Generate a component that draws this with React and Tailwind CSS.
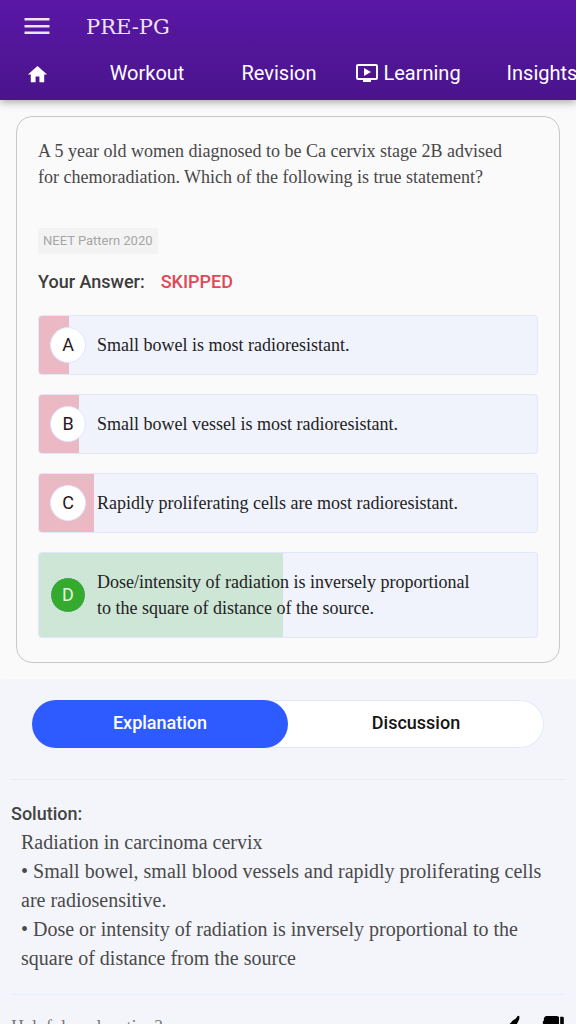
import React from 'react';
import { MdHome, MdOndemandVideo } from 'react-icons/md';

const serif = "font-['Liberation_Serif',serif]";

const options = [
  { letter: 'A', text: 'Small bowel is most radioresistant.', share: 6 },
  { letter: 'B', text: 'Small bowel vessel is most radioresistant.', share: 8 },
  { letter: 'C', text: 'Rapidly proliferating cells are most radioresistant.', share: 11 },
  {
    letter: 'D',
    text: 'Dose/intensity of radiation is inversely proportional to the square of distance of the source.',
    share: 49,
    correct: true,
  },
];

const ThumbIcon = ({ className = '' }) => {
  return (
    <svg viewBox="0 0 24 24" className={`size-6 ${className}`} fill="currentColor">
      <path d="M1.200 11.500h3.600v10.800H2.500c-.8 0-1.300-.6-1.300-1.300z" />
      <path d="M6 12c3.600-.6 6.200-3.300 8.400-6.200 2-1.500 4-2.300 4.800-4.400.3-.9 1.900-.8 2.200.2.500 2.600-1.600 5.300-2.800 7.900h2.600c2.100 0 2.300 2.700.8 3.200 1.300.8 1 2.600-.4 3 1 .9.700 2.500-.6 2.900.6 1.500-.2 4.100-2.400 4.400H9c-1.300 0-2-.5-3-.9z" />
    </svg>
  );
};

const Header = () => {
  return (
    <header className="relative z-10 shrink-0 bg-linear-to-b from-[#5a17a6] to-[#4a148c] text-white shadow-[0_2px_8px_rgba(0,0,0,0.35)]">
      <div className="flex h-[52px] items-center pl-[22px] text-[#ece3f3]">
        <button type="button" aria-label="Open menu" className="mr-[34px]">
          <svg viewBox="0 0 30 30" className="size-[30px]" fill="currentColor">
            <path d="M2.500 7h25v2.500h-25zM2.500 14h25v2.500h-25zM2.500 20.500h25V23h-25z" />
          </svg>
        </button>
        <h1 className="pt-1 font-['DejaVu_Serif',serif] text-[21px]">PRE-PG</h1>
      </div>
      <nav className="flex h-12 overflow-hidden pb-1.5 text-xl">
        <a href="#home" aria-label="Home" className="flex w-[74px] shrink-0 items-center justify-center pt-0.5">
          <MdHome className="size-[23px]" />
        </a>
        <a href="#workout" className="flex w-[146px] shrink-0 items-center justify-center">Workout</a>
        <a href="#revision" className="flex w-[118px] shrink-0 items-center justify-center">Revision</a>
        <a href="#learning" className="flex w-[140px] shrink-0 items-center justify-center gap-1">
          <MdOndemandVideo className="size-6" />
          Learning
        </a>
        <a href="#insights" className="flex w-[128px] shrink-0 items-center justify-center">Insights</a>
      </nav>
    </header>
  );
};

const Option = ({ letter, text, share, correct }) => {
  return (
    <li className="relative flex items-center overflow-hidden rounded border border-[#dfe6fd] bg-[#f0f3fc] py-4 pr-14 pl-[11px]">
      <div
        className={`absolute inset-y-0 left-0 ${correct ? 'bg-[#cee6d6]' : 'bg-[#eab9c4]'}`}
        style={{ width: `${share}%` }}
      />
      <span
        className={`relative -my-2 mr-[11px] flex size-9 shrink-0 items-center justify-center rounded-full border border-[#dfe6fd] text-lg ${
          correct ? 'bg-[#34aa2f] text-[#e4f5e4]' : 'bg-white text-[#2c1820]'
        }`}
      >
        {letter}
      </span>
      <span className={`relative ${serif} text-lg leading-[26px] text-[#222]`}>{text}</span>
    </li>
  );
};

const QuestionCard = () => {
  return (
    <section className="mx-4 mt-4 rounded-2xl border border-[#c8c8c8] px-[21px] pt-[21px] pb-6">
      <p className={`${serif} pr-4 text-lg leading-[26px] text-[#484848]`}>
        A 5 year old women diagnosed to be Ca cervix stage 2B advised for chemoradiation. Which of the following is
        true statement?
      </p>
      <div className="mt-[38px] flex">
        <span className="rounded-xs bg-[#f3f3f3] px-[5px] text-[13px] leading-[26px] text-[#a6a6a6]">
          NEET Pattern 2020
        </span>
      </div>
      <p className="mt-4 flex gap-4 text-lg leading-6 font-medium text-[#3c3c3c]">
        <span>Your Answer:</span>
        <span className="text-[#e04858]">SKIPPED</span>
      </p>
      <ol className="mt-[21px] flex flex-col gap-[19px]">
        {options.map((option) => (
          <Option key={option.letter} {...option} />
        ))}
      </ol>
    </section>
  );
};

const Explanation = () => {
  return (
    <section className="mt-4 rounded-t bg-[#f4f5fb] px-[11px] pt-[21px] pb-6">
      <div
        role="tablist"
        className="mx-[21px] flex h-12 rounded-full bg-white text-lg font-medium ring-1 ring-[#e2e9fe] ring-inset"
      >
        <button type="button" role="tab" aria-selected="true" className="flex-1 rounded-full bg-[#2e5bff] pb-0.5 text-white">
          Explanation
        </button>
        <button type="button" role="tab" aria-selected="false" className="flex-1 rounded-full pb-0.5 text-[#141414]">
          Discussion
        </button>
      </div>
      <div className="mt-[31px] border-t border-[#ececf2] pt-[19px]">
        <h2 className="text-lg leading-[29px] font-medium text-[#444]">Solution:</h2>
        <div className={`${serif} px-[10px] text-xl leading-[29px] text-[#4a4a4a]`}>
          <p>Radiation in carcinoma cervix</p>
          <p>• Small bowel, small blood vessels and rapidly proliferating cells are radiosensitive.</p>
          <p>• Dose or intensity of radiation is inversely proportional to the square of distance from the source</p>
        </div>
      </div>
      <div className="mt-[21px] flex items-center justify-between border-t border-[#e4effc] pt-[18px]">
        <span className={`${serif} text-lg leading-7 text-[#777]`}>Helpful explanation?</span>
        <div className="flex gap-[19px] text-black">
          <button type="button" aria-label="Helpful">
            <ThumbIcon />
          </button>
          <button type="button" aria-label="Not helpful">
            <ThumbIcon className="rotate-180" />
          </button>
        </div>
      </div>
    </section>
  );
};

const App = () => {
  return (
    <div className="flex h-screen flex-col bg-[#fafafa] font-[Roboto,sans-serif]">
      <Header />
      <main className="min-h-0 flex-1 overflow-y-auto [scrollbar-width:none]">
        <QuestionCard />
        <Explanation />
      </main>
    </div>
  );
};

export default App;
